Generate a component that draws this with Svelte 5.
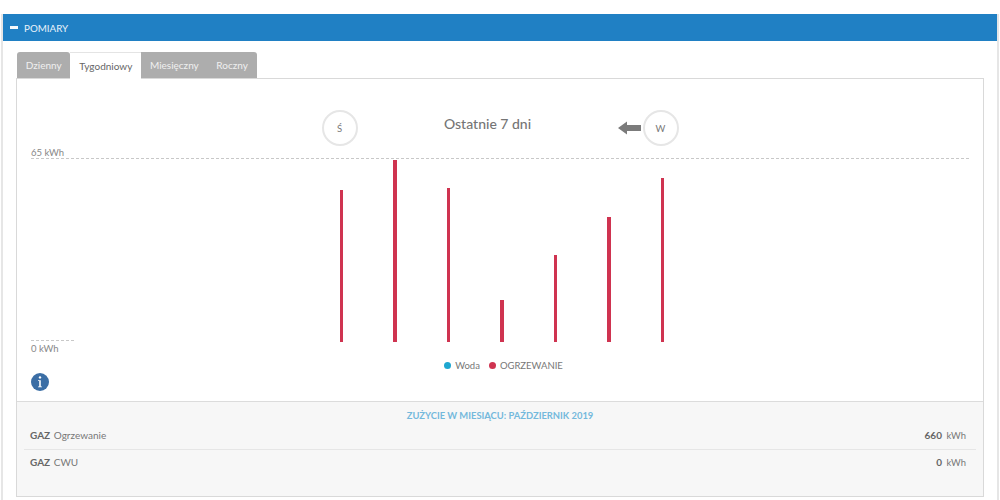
<script>
  const tabs = ["Dzienny", "Tygodniowy", "Miesięczny", "Roczny"];
  const active = "Tygodniowy";

  // heights in px above the 0 kWh baseline
  const bars = [152, 182, 154, 42, 87, 125, 164];

  const rows = [
    { type: "GAZ", name: "Ogrzewanie", value: 660 },
    { type: "GAZ", name: "CWU", value: 0 },
  ];
</script>

<div class="panel">
  <div class="panel-head">
    <span class="minus"></span>
    <span>POMIARY</span>
  </div>

  <div class="panel-body">
    <div class="tabs">
      {#each tabs as tab}
        <div class="tab" class:active={tab === active}>{tab}</div>
      {/each}
    </div>

    <div class="box">
      <div class="chart">
        <div class="chart-head">
          <div class="day-circle">Ś</div>
          <div class="title">Ostatnie 7 dni</div>
          <div class="next">
            <svg width="24" height="14" viewBox="0 0 24 14" aria-hidden="true">
              <path d="M0 7 L9 0.5 V4 H23 V10 H9 V13.5 Z" fill="#7b7b7b" />
            </svg>
            <div class="day-circle">W</div>
          </div>
        </div>

        <div class="plot">
          <div class="axis-top">65 kWh</div>
          <div class="bars">
            {#each bars as h}
              <div class="bar" style="height: {h}px"></div>
            {/each}
          </div>
          <div class="axis-bottom">0 kWh</div>
        </div>

        <div class="legend">
          <span class="dot water"></span><span>Woda</span>
          <span class="dot heat"></span><span>OGRZEWANIE</span>
        </div>

        <div class="info">
          <svg width="18" height="18" viewBox="0 0 18 18" aria-hidden="true">
            <circle cx="9" cy="9" r="9" fill="#3b6ea5" />
            <circle cx="9" cy="4.4" r="1.2" fill="#fff" />
            <path d="M7 7.2 H9.8 V13.4 H11 V14.2 H7 V13.4 H8.2 V8 H7 Z" fill="#fff" />
          </svg>
        </div>
      </div>

      <div class="usage">
        <div class="usage-title">ZUŻYCIE W MIESIĄCU: PAŹDZIERNIK 2019</div>
        {#each rows as row}
          <div class="row">
            <span><b>{row.type}</b> {row.name}</span>
            <span><b>{row.value}</b> <span class="unit">kWh</span></span>
          </div>
        {/each}
      </div>
    </div>
  </div>
</div>

<style>
  :global(body) {
    margin: 0;
    background: #fff;
    font-family: "Lato", "Open Sans", sans-serif;
    color: #777;
  }

  .panel {
    width: 998px;
    height: 486px;
    margin: 14px 0 0 1px;
    box-sizing: border-box;
    border-left: 2px solid #e6e6e6;
    border-right: 2px solid #e6e6e6;
    overflow: hidden;
    position: relative;
  }

  .panel-head {
    display: flex;
    align-items: center;
    gap: 6px;
    height: 27px;
    margin: 0 -2px;
    padding-left: 9px;
    background: #2080c4;
    border-radius: 2px 2px 0 0;
    color: #e8f2fa;
    font-size: 9.8px;
  }

  .minus {
    width: 8px;
    height: 3px;
    background: #f4f9fc;
  }

  .panel-body {
    padding: 11px 13px 0 13px;
  }

  .tabs {
    display: flex;
    height: 26px;
    margin-left: 1px;
  }

  .tab {
    padding: 0 8.8px;
    background: #adadad;
    color: #f0f0f0;
    font-size: 10px;
    line-height: 27px;
  }

  .tab:first-child {
    border-radius: 3px 3px 0 0;
  }

  .tab:last-child {
    border-radius: 0 3px 0 0;
  }

  .tab.active {
    background: #fff;
    color: #666;
    border-top: 1px solid #e4e4e4;
    line-height: 26px;
    margin-bottom: -1px;
    position: relative;
    z-index: 1;
  }

  .box {
    height: 419px;
    box-sizing: border-box;
    border: 1px solid #d9d9d9;
    display: flex;
    flex-direction: column;
  }

  .chart {
    height: 322px;
    position: relative;
    border-bottom: 1px solid #dcdcdc;
    flex: none;
  }

  .chart-head {
    position: relative;
    display: flex;
    justify-content: center;
    height: 80px;
  }

  .title {
    margin-top: 36px;
    margin-left: -25px;
    font-size: 14px;
    color: #757575;
    font-weight: 500;
  }

  .day-circle {
    position: absolute;
    top: 31px;
    left: 305px;
    width: 36px;
    height: 36px;
    box-sizing: border-box;
    display: flex;
    align-items: center;
    justify-content: center;
    padding-right: 1px;
    border: 2px solid #e6e6e6;
    border-radius: 50%;
    background: #fff;
    font-size: 9.5px;
    color: #777;
  }

  .next {
    position: absolute;
    top: 0;
    left: 0;
  }

  .next svg {
    position: absolute;
    top: 42px;
    left: 601px;
  }

  .next .day-circle {
    left: 626px;
    top: 31px;
  }

  .plot {
    position: relative;
    height: 183px;
  }

  .axis-top {
    position: absolute;
    left: 14px;
    right: 14px;
    top: -13px;
    height: 12px;
    border-bottom: 1px dashed #c8c8c8;
    font-size: 9.5px;
    line-height: 13px;
    color: #888;
  }

  .axis-bottom {
    position: absolute;
    left: 14px;
    top: 181px;
    width: 43px;
    border-top: 1px dashed #c8c8c8;
    padding-top: 2px;
    font-size: 9.5px;
    line-height: 12px;
    color: #888;
  }

  .bars {
    position: absolute;
    left: 322.5px;
    top: 1px;
    height: 182px;
    display: flex;
    align-items: flex-end;
    gap: 50px;
  }

  .bar {
    width: 3.5px;
    background: #cf3350;
  }

  .legend {
    display: flex;
    justify-content: center;
    align-items: center;
    margin-top: 18px;
    margin-left: 7px;
    font-size: 9.5px;
    color: #777;
  }

  .dot {
    width: 7px;
    height: 7px;
    border-radius: 50%;
    margin-right: 4px;
  }

  .dot.water {
    background: #1ea7d0;
  }

  .dot.heat {
    background: #cf3350;
    margin-left: 9px;
  }

  .info {
    position: absolute;
    left: 14px;
    top: 294px;
    line-height: 0;
  }

  .usage {
    flex: 1;
    background: #f7f7f7;
    font-size: 10px;
  }

  .usage-title {
    margin-top: 8px;
    text-align: center;
    font-size: 9.4px;
    font-weight: 700;
    color: #74b9dc;
  }

  .row {
    display: flex;
    justify-content: space-between;
    margin: 0 7px;
    padding: 8px 10px 0 6px;
    height: 28px;
    box-sizing: border-box;
    color: #777;
  }

  .row + .row {
    padding-top: 6px;
    border-top: 1px solid #e6e6e6;
  }

  .row b {
    color: #666;
    margin-right: 1px;
  }

  .unit {
    font-size: 9.4px;
    margin-left: 1px;
  }
</style>
